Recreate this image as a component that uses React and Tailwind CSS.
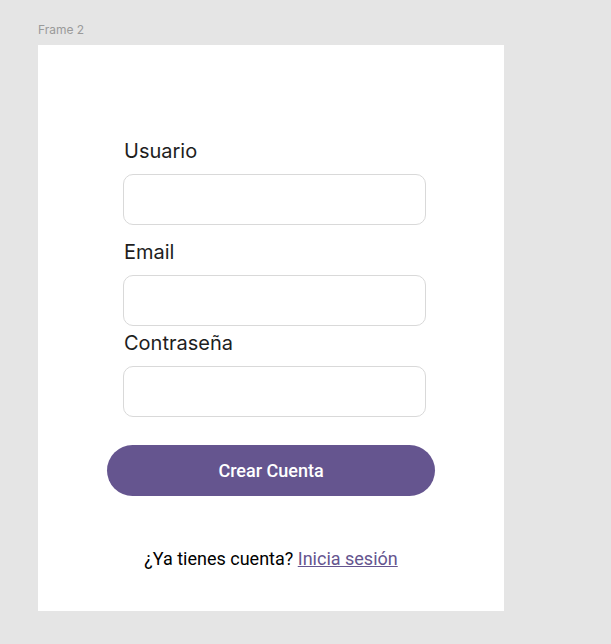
export default function App() {
  return (
    <div className="min-h-[644px] w-full bg-[#e5e5e5] pt-[22px]" style={{ fontFamily: 'Inter, "Noto Sans", sans-serif' }}>
      <div className="ml-[38px] h-[16px] text-[12px] leading-[16px] text-[#9a9a9a]">Frame 2</div>
      <div className="ml-[38px] mt-[7px] flex h-[566px] w-[466px] flex-col bg-white">
        <div className="ml-[85px] mt-[94px] flex w-[303px] flex-col">
          <label className="h-[24px] pl-px text-[20px] leading-[24px] text-[#1e1e1e]">Usuario</label>
          <div className="mt-[11px] h-[51px] rounded-[10px] border border-[#d9d9d9] bg-white" />
          <label className="mt-[15px] h-[24px] pl-px text-[20px] leading-[24px] text-[#1e1e1e]">Email</label>
          <div className="mt-[11px] h-[51px] rounded-[10px] border border-[#d9d9d9] bg-white" />
          <label className="mt-[5px] h-[24px] pl-px text-[20px] leading-[24px] text-[#1e1e1e]">Contraseña</label>
          <div className="mt-[11px] h-[51px] rounded-[10px] border border-[#d9d9d9] bg-white" />
        </div>
        <button
          className="ml-[69px] mt-[28px] flex h-[51px] w-[328px] items-center justify-center rounded-full bg-[#65558f] text-[18px] font-medium text-white"
          style={{ fontFamily: 'Roboto, sans-serif' }}
        >
          Crear Cuenta
        </button>
        <p
          className="mt-[51px] text-center text-[18px] font-normal leading-[24px] text-black"
          style={{ fontFamily: 'Roboto, sans-serif' }}
        >
          ¿Ya tienes cuenta?{' '}
          <a href="#" className="text-[#65558f] underline">Inicia sesión</a>
        </p>
      </div>
    </div>
  );
}
